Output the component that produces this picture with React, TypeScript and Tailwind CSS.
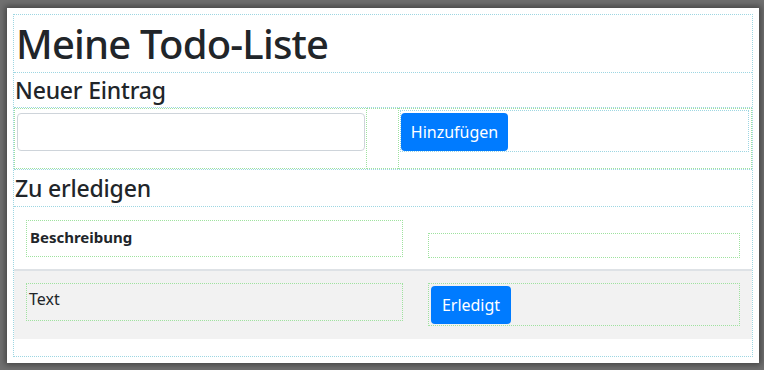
import React from "react";

const cyan = "border border-dotted border-[#9dd6e2]";
const green = "border border-dotted border-[#9fe29f]";

export default function App() {
  return (
    <div
      className="w-[764px] h-[370px] bg-[#707070] pt-[8px] pl-[7px] overflow-hidden"
      style={{ fontFamily: '"Noto Sans", "Open Sans", sans-serif' }}
    >
      <div className="w-[752px] h-[355px] bg-white shadow-[0_0_6px_2px_rgba(40,40,40,0.6)] pt-[6px] pl-[6px]">
        <div className={`w-[740px] h-[343px] ${cyan} flex flex-col text-[#212529]`}>
          {/* Title */}
          <div className="h-[58px] shrink-0 border-b border-dotted border-[#9dd6e2] pl-[2px] flex items-center">
            <h1 className="text-[40px] leading-[48px] font-medium tracking-[-0.8px]">Meine Todo-Liste</h1>
          </div>
          {/* Neuer Eintrag */}
          <div className="h-[35px] shrink-0 border-b border-dotted border-[#9dd6e2] pl-[1px] flex items-center">
            <h2 className="text-[23px] leading-[28px] font-medium tracking-[-0.2px]">Neuer Eintrag</h2>
          </div>
          {/* Form row */}
          <div className="h-[62px] shrink-0 border-b border-dotted border-[#9dd6e2] flex">
            <div className={`w-[353px] h-[61px] ${green} pl-[2px] pt-[4px]`}>
              <input className="w-[348px] h-[38px] border border-[#ced4da] rounded-[4px] bg-white" />
            </div>
            <div className="w-[31px] h-[61px] border-y border-dotted border-[#9fe29f]" />
            <div className={`flex-1 h-[61px] ${green} pl-[1px] pt-[1px]`}>
              <div className={`w-[349px] h-[42px] ${cyan} pt-[2px]`}>
                <button className="w-[107px] h-[38px] rounded-[4px] bg-[#007bff] text-white text-[16px]">
                  Hinzufügen
                </button>
              </div>
            </div>
          </div>
          {/* Zu erledigen */}
          <div className="h-[37px] shrink-0 border-b border-dotted border-[#9dd6e2] pl-[1px] flex items-center">
            <h2 className="text-[23px] leading-[28px] font-medium tracking-[-0.2px]">Zu erledigen</h2>
          </div>
          {/* Table */}
          <div className="flex flex-col">
            <div className="h-[64px] border-b-2 border-[#dee2e6] flex pl-[12px] pt-[13px]">
              <div className={`w-[377px] h-[37px] ${green} pl-[3px] pt-[4px] font-bold text-[15px] leading-[24px]`}>
                Beschreibung
              </div>
              <div className={`ml-[25px] mt-[13px] w-[312px] h-[25px] ${green}`} />
            </div>
            <div className="h-[68px] bg-[#f2f2f2] flex pl-[12px] pt-[12px]">
              <div className={`w-[377px] h-[38px] ${green} pl-[2px] pt-[3px] text-[16px] leading-[24px]`}>
                Text
              </div>
              <div className={`ml-[25px] w-[312px] h-[43px] ${green} pl-[2px] pt-[2px]`}>
                <button className="w-[80px] h-[38px] rounded-[4px] bg-[#007bff] text-white text-[16px]">
                  Erledigt
                </button>
              </div>
            </div>
          </div>
        </div>
      </div>
    </div>
  );
}
